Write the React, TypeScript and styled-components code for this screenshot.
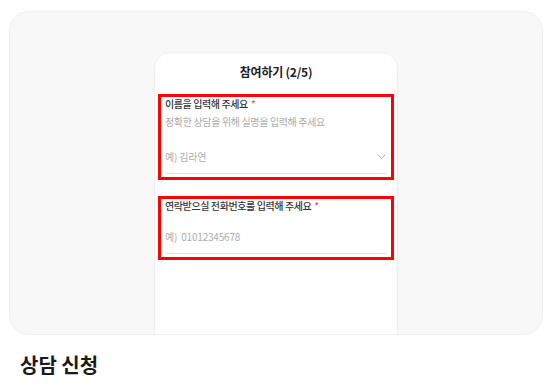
import React from "react";
import styled, { createGlobalStyle } from "styled-components";

const GlobalStyle = createGlobalStyle`
  html, body { margin: 0; padding: 0; background: #ffffff; }
  body { font-family: "Noto Sans CJK KR", "Noto Sans", sans-serif; color: #222; }
  * { box-sizing: border-box; }
`;

const Page = styled.div`
  padding: 11px 10px 0 9px;
`;

const Panel = styled.section`
  height: 324px;
  background: #f8f8f8;
  border: 1px solid #efefef;
  border-radius: 20px;
  overflow: hidden;
  display: flex;
  justify-content: center;
  padding-top: 40px;
`;

const Card = styled.div`
  width: 244px;
  height: 320px;
  flex: none;
  background: #ffffff;
  border: 1px solid #eeeeee;
  border-radius: 16px;
  padding: 11px 6px 0;
  display: flex;
  flex-direction: column;
`;

const CardTitle = styled.h2`
  margin: 0 0 17px;
  font-size: 12px;
  line-height: 16px;
  font-weight: 700;
  text-align: center;
  color: #222;
  letter-spacing: -0.02em;
`;

const Field = styled.div<{ $gap?: number }>`
  margin-top: ${(p) => p.$gap ?? 0}px;
  outline: 3px solid #ff0000;
  padding: 0 4px 3px;
  display: flex;
  flex-direction: column;
`;

const Label = styled.label`
  font-size: 10px;
  line-height: 13px;
  font-weight: 500;
  color: #333;
  letter-spacing: -0.04em;
`;

const Required = styled.span`
  color: #f25555;
  margin-left: 3px;
`;

const Desc = styled.p`
  margin: 5px 0 0;
  font-size: 10px;
  line-height: 13px;
  color: #acacac;
  letter-spacing: -0.035em;
`;

const InputRow = styled.div<{ $top: number }>`
  margin-top: ${(p) => p.$top}px;
  padding-bottom: 10px;
  border-bottom: 1px solid #e2e2e2;
  display: flex;
  align-items: center;
`;

const Input = styled.input`
  flex: 1;
  min-width: 0;
  border: none;
  outline: none;
  background: transparent;
  padding: 0;
  font-family: "Noto Sans CJK KR", "Noto Sans", sans-serif;
  font-size: 10px;
  line-height: 13px;
  height: 13px;
  color: #333;
  letter-spacing: -0.02em;
  &::placeholder { color: #acacac; }
`;

const Chevron = styled.svg`
  width: 9px;
  height: 5px;
  margin-right: 1px;
  flex: none;
`;

const Heading = styled.h1`
  margin: 17px 0 0 11px;
  font-size: 20px;
  line-height: 26px;
  font-weight: 700;
  color: #1a1a1a;
`;

export default function App() {
  return (
    <>
      <GlobalStyle />
      <Page>
        <Panel>
          <Card>
            <CardTitle>참여하기 (2/5)</CardTitle>
            <Field>
              <Label>
                이름을 입력해 주세요<Required>*</Required>
              </Label>
              <Desc>정확한 상담을 위해 실명을 입력해 주세요</Desc>
              <InputRow $top={22}>
                <Input placeholder="예) 김라연" />
                <Chevron viewBox="0 0 9 5" fill="none">
                  <path d="M0.5 0.5 L4.5 4.3 L8.5 0.5" stroke="#b5b5b5" strokeWidth="1" />
                </Chevron>
              </InputRow>
            </Field>
            <Field $gap={22}>
              <Label>
                연락받으실 전화번호를 입력해 주세요<Required>*</Required>
              </Label>
              <InputRow $top={18}>
                <Input placeholder="예)  01012345678" />
              </InputRow>
            </Field>
          </Card>
        </Panel>
        <Heading>상담 신청</Heading>
      </Page>
    </>
  );
}
